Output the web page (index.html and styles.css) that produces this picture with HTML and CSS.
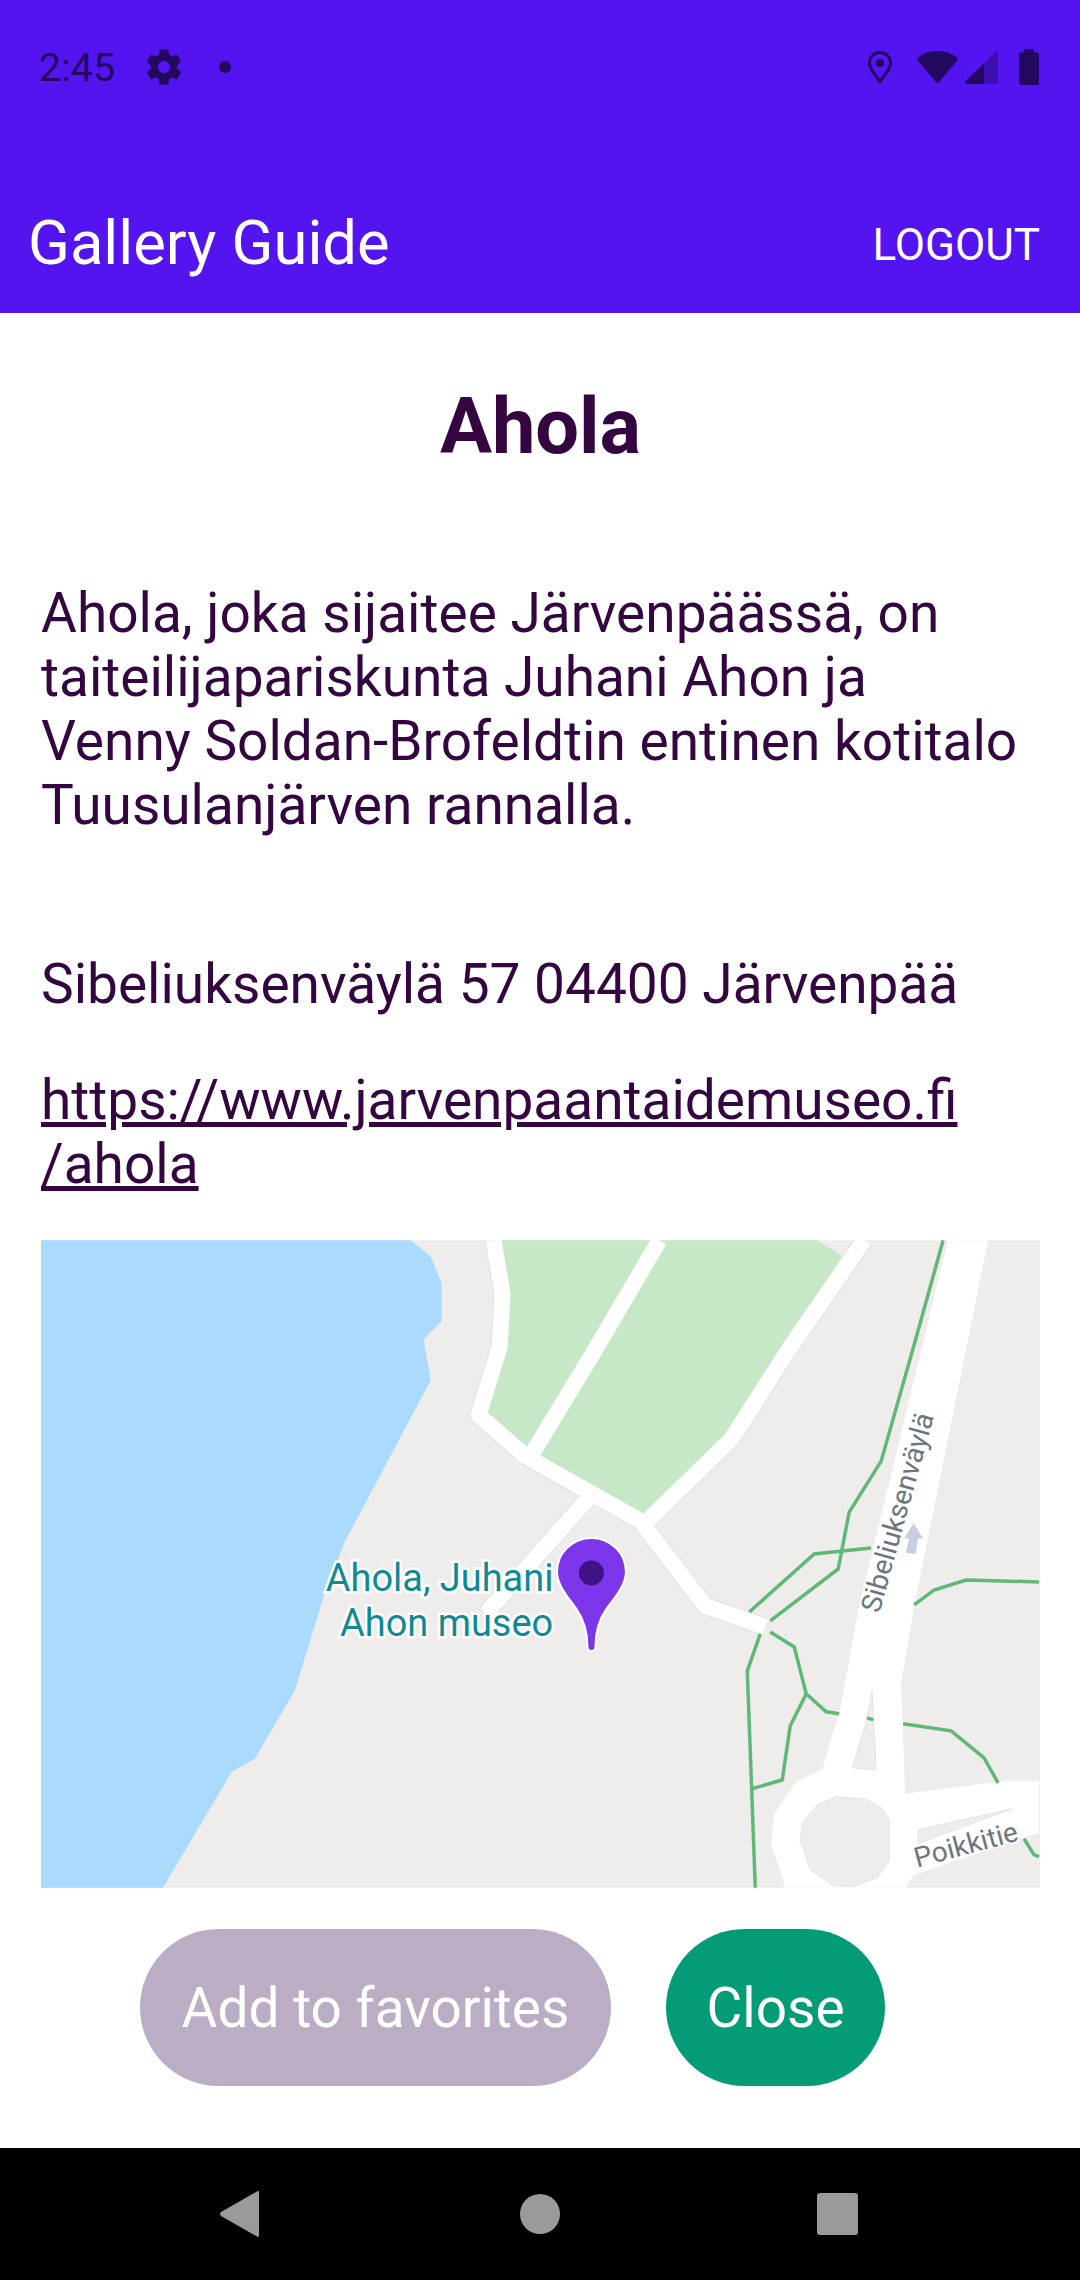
FILE: index.html
```html
<!DOCTYPE html>
<html lang="en">
<head>
    <meta charset="UTF-8">
    <meta name="viewport" content="width=device-width, initial-scale=1.0">
    <title>Gallery Guide</title>
    <link rel="stylesheet" href="styles.css">
</head>
<body>
    <div id="screen">
        <div id="header">
            <div id="statusbar">
                <div class="status-left">
                    <span class="time">2:45</span>
                    <svg class="gear" viewBox="0 0 24 24"><path fill-rule="evenodd" d="M19.4 13c.04-.33.06-.66.06-1s-.02-.67-.06-1l2.1-1.65c.19-.15.24-.42.12-.64l-2-3.46c-.12-.22-.39-.3-.61-.22l-2.49 1c-.52-.4-1.08-.73-1.69-.98l-.38-2.65A.49.49 0 0 0 14 2h-4c-.25 0-.46.18-.49.42l-.38 2.65c-.61.25-1.17.59-1.69.98l-2.49-1c-.23-.09-.49 0-.61.22l-2 3.46c-.13.22-.07.49.12.64L4.56 11c-.04.33-.07.67-.07 1s.03.67.07 1l-2.1 1.65c-.19.15-.25.42-.12.64l2 3.46c.12.22.39.3.61.22l2.49-1c.52.4 1.08.73 1.69.98l.38 2.65c.03.24.24.42.49.42h4c.25 0 .46-.18.49-.42l.38-2.65c.61-.25 1.17-.59 1.69-.98l2.49 1c.23.09.49 0 .61-.22l2-3.46c.12-.22.07-.49-.12-.64L19.4 13zM12 15.5a3.5 3.5 0 1 1 0-7 3.5 3.5 0 0 1 0 7z"/></svg>
                    <span class="dot"></span>
                </div>
                <div class="status-right">
                    <svg class="ic-loc" viewBox="0 0 24 33"><path fill-rule="evenodd" d="M12 0C5.4 0 0 5.2 0 11.8 0 19.5 8.4 27.7 12 33c3.6-5.3 12-13.500 12-21.200C24 5.200 18.600 0 12 0zm0 3c5 0 9 3.900 9 8.800 0 5-5.400 11.200-9 16-3.600-4.800-9-11-9-16C3 6.900 7 3 12 3z"/><circle cx="12" cy="12" r="4"/></svg>
                    <svg class="ic-wifi" viewBox="0 0 41 32"><path d="M20.500 0C12.500 0 6 2.500.8 6.600c-.8.600-1 1.700-.3 2.500L18.800 31c.900 1.200 2.600 1.200 3.500 0L40.500 9.100c.7-.8.500-1.900-.3-2.500C35 2.500 28.500 0 20.500 0z"/></svg>
                    <svg class="ic-signal" viewBox="0 0 33 33"><path opacity=".45" d="M31 0c1.200 0 2 .8 2 2v29c0 1.200-.8 2-2 2H19V12.300z"/><path d="M19 12.300V33H2c-1.700 0-2.500-1.800-1.300-3z"/></svg>
                    <svg class="ic-batt" viewBox="0 0 20 36"><path d="M5 0h10v3.500h3c1.200 0 2 .8 2 2V34c0 1.200-.8 2-2 2H2c-1.200 0-2-.8-2-2V5.500c0-1.200.8-2 2-2h3z"/></svg>
                </div>
            </div>
            <div id="appbar">
                <span class="app-title">Gallery Guide</span>
                <span class="logout">LOGOUT</span>
            </div>
        </div>

        <div id="content">
            <h1>Ahola</h1>
            <p class="desc">Ahola, joka sijaitee Järvenpäässä, on taiteilijapariskunta Juhani Ahon ja Venny Soldan-Brofeldtin entinen kotitalo Tuusulanjärven rannalla.</p>
            <p class="address">Sibeliuksenväylä 57 04400 Järvenpää</p>
            <a class="link" href="#">https://www.jarvenpaantaidemuseo.fi<br>/ahola</a>

            <svg id="map" viewBox="0 0 1000 648">
                <defs>
                    <g id="road-lines">
                        <polyline points="453,0 462,54 459,107 438,175 485,216 600,281 665,366 725,387"/>
                        <polyline points="619,0 552,114 490,216"/>
                        <polyline points="824,0 748,110 691,199 607,281"/>
                        <polyline points="548,258 500,312 446,373"/>
                    </g>
                </defs>
                <rect class="map-bg" width="1000" height="648"/>
                <polygon class="water" points="0,0 370,0 390,16 401,43 401,81 383,99 390,140 304,302 284,353 254,451 214,519 191,532 122,648 0,648"/>
                <use href="#road-lines" class="road-casing"/>
                <polygon class="park" points="461,0 777,0 802,16 744,101 686,193 600,276 500,216 487,207 446,173 466,110 469,54"/>
                <use href="#road-lines" class="road-top"/>

                <!-- the dual carriageway and the roundabout -->
                <polygon class="road-fill" points="908,0 948,0 874,366 861,443 865,554 968,541 999,541 999,593 874,635 865,648 744,648 743,640 731,605 734,574 757,541 782,530 800,469 819,366"/>
                <polygon class="land" points="832,451 836,530 812,528 825,486"/>
                <polygon class="land" points="796,557 825,559 841,568 849,580 849,621 837,638 813,647 793,646 770,630 760,601 762,584 777,565"/>
                <polygon class="land" points="878,590 972,569 878,604"/>

                <g class="paths">
                    <polyline points="903,0 875,101 841,221 809,272 798,329 730,381"/>
                    <polyline points="831,308 774,314 709,372"/>
                    <polyline points="720,394 707,431 715,648"/>
                    <polyline points="730,392 754,407 766,454 786,472 799,474"/>
                    <polyline points="766,454 750,486 742,540 712,549"/>
                    <polyline points="827,478 833,480"/>
                    <polyline points="863,484 911,491 944,518 958,543"/>
                    <polyline points="874,365 894,350 926,340 999,342"/>
                    <polyline points="984,599 994,615 999,617"/>
                </g>

                <text class="road-label" transform="translate(839,374) rotate(-74.500)">Sibeliuksenväylä</text>
                <path class="arrow" d="M873.600 283L864 298.500H869L865.700 312.600L875.300 314L878 298.500H883z"/>
                <text class="road-label" transform="translate(877,628) rotate(-15)">Poikkitie</text>

                <text class="poi" x="399" y="351" text-anchor="middle">Ahola, Juhani</text>
                <text class="poi" x="406" y="396" text-anchor="middle">Ahon museo</text>

                <path class="pin" d="M551 298C570 298 585.500 313 585.500 332C585.500 345 574 358 566 369C559 379 555 390 555 407a4 4 0 0 1-8 0C547 390 543 379 536 369C528 358 516.500 345 516.500 332C516.500 313 532 298 551 298z"/>
                <circle class="pin-dot" cx="551" cy="333" r="12.500"/>
            </svg>

            <div id="buttons">
                <button class="btn btn-fav">Add to favorites</button>
                <button class="btn btn-close">Close</button>
            </div>
        </div>

        <div id="navbar">
            <svg class="nav-back" viewBox="0 0 39 46"><path d="M37 .5c1-.9 2-.4 2 1v43c0 1.400-1 1.900-2 1L1 25c-1.200-1.200-1.200-2.800 0-4z"/></svg>
            <span class="nav-home"></span>
            <span class="nav-recent"></span>
        </div>
    </div>
</body>
</html>
```

FILE: styles.css
```css
*{
    margin: 0;
    padding: 0;
    box-sizing: border-box;
}
body{
    font-family: Roboto, sans-serif;
    background: #fff;
}
#screen{
    display: flex;
    flex-direction: column;
    width: 1080px;
    height: 2280px;
}
#header{
    height: 313px;
    background: #5314f0;
    color: #fff;
}
#statusbar{
    display: flex;
    justify-content: space-between;
    align-items: center;
    height: 134px;
    padding: 0 41px 0 39px;
    color: #22095f;
}
.status-left, .status-right{
    display: flex;
    align-items: center;
}
.time{
    font-size: 39.500px;
}
.gear{
    width: 42px;
    height: 42px;
    margin-left: 28px;
    fill: #22095f;
}
.dot{
    width: 12px;
    height: 12px;
    margin-left: 34px;
    border-radius: 50%;
    background: #22095f;
}
.status-right svg{
    fill: #22095f;
}
.ic-loc{
    width: 24px;
    height: 33px;
}
.ic-wifi{
    width: 41px;
    height: 32px;
    margin-left: 25px;
}
.ic-signal{
    width: 33px;
    height: 33px;
    margin-left: 7px;
}
.ic-batt{
    width: 20px;
    height: 36px;
    margin-left: 21px;
}
#appbar{
    display: flex;
    justify-content: space-between;
    align-items: center;
    height: 179px;
    padding: 39px 40px 0 28px;
}
.app-title{
    font-size: 61.500px;
}
.logout{
    font-size: 44px;
    font-weight: 400;
    margin-top: 4px;
}
#content{
    flex: 1;
    padding: 0 40px 0 41px;
    color: #33063f;
}
h1{
    margin-top: 69px;
    font-size: 77.500px;
    line-height: 90px;
    font-weight: 700;
    text-align: center;
}
.desc{
    margin-top: 109px;
    padding-right: 20px;
    font-size: 55px;
    line-height: 64px;
}
.address{
    margin-top: 115px;
    font-size: 55px;
    line-height: 64px;
}
.link{
    display: block;
    margin-top: 52px;
    font-size: 55px;
    line-height: 64px;
    color: #33063f;
}
#map{
    display: block;
    width: 999px;
    height: 648px;
    margin-top: 44px;
}
.map-bg{
    fill: #eeedeb;
}
.land{
    fill: #eeedeb;
    stroke: #e4e4e2;
    stroke-width: 1;
}
.water{
    fill: #aadafe;
}
.park{
    fill: #c6e8c6;
}
.road-casing{
    fill: none;
    stroke: #e2e2e0;
    stroke-width: 18;
    stroke-linejoin: round;
}
.road-top{
    fill: none;
    stroke: #fff;
    stroke-width: 16;
    stroke-linejoin: round;
}
.road-fill{
    fill: #fff;
}
.paths polyline{
    fill: none;
    stroke: #5fb878;
    stroke-width: 3.500;
}
.road-label{
    font-size: 28px;
    fill: #6b7680;
    stroke: #fff;
    stroke-width: 3;
    paint-order: stroke;
}
.arrow{
    fill: #c8cde0;
}
.poi{
    font-size: 38px;
    fill: #0f8a95;
    stroke: #fff;
    stroke-width: 5;
    paint-order: stroke;
}
.pin{
    fill: #7c35e8;
    stroke: #fff;
    stroke-width: 2;
}
.pin-dot{
    fill: #3f1285;
}
#buttons{
    display: flex;
    justify-content: center;
    gap: 55px;
    margin-top: 41px;
    padding-right: 56px;
}
.btn{
    height: 157px;
    border: none;
    border-radius: 79px;
    font-family: Roboto, sans-serif;
    font-size: 55px;
    color: #fff;
}
.btn-fav{
    width: 471px;
    background: #bbadc4;
}
.btn-close{
    width: 219px;
    background: #049c76;
}
#navbar{
    display: flex;
    justify-content: space-between;
    align-items: center;
    height: 132px;
    padding: 0 222px 0 220px;
    background: #000;
}
.nav-back{
    width: 39px;
    height: 46px;
    fill: #9a9a9a;
}
.nav-home{
    width: 40px;
    height: 40px;
    margin-left: 4px;
    border-radius: 50%;
    background: #9a9a9a;
}
.nav-recent{
    width: 41px;
    height: 42px;
    border-radius: 3px;
    background: #9a9a9a;
}
```
